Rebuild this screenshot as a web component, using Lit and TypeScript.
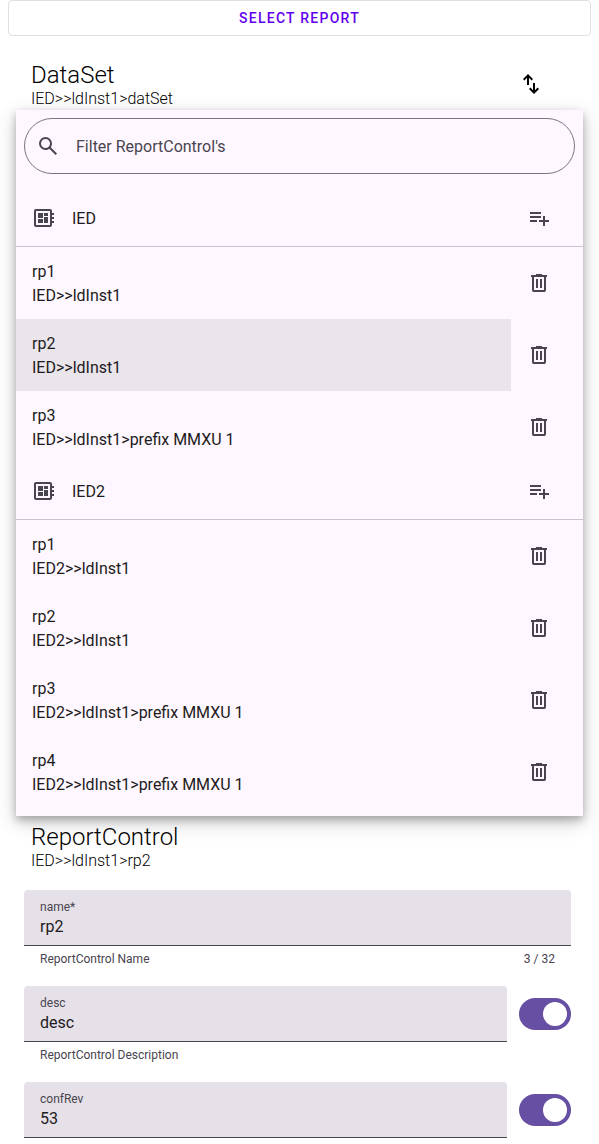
import { LitElement, html, css, svg } from "lit";
import { customElement, property } from "lit/decorators.js";

const icons: Record<string, { box: string; d: string }> = {
  swap: { box: "0 -960 960 960", d: "M320-440v-287L217-624l-57-56 200-200 200 200-57 56-103-103v287h-80ZM600-80 400-280l57-56 103 103v-287h80v287l103-103 57 56L600-80Z" },
  search: { box: "0 -960 960 960", d: "M784-120 532-372q-30 24-69 38t-83 14q-109 0-184.5-75.5T120-580q0-109 75.5-184.5T380-840q109 0 184.5 75.5T640-580q0 44-14 83t-38 69l252 252-56 56ZM380-400q75 0 127.5-52.5T560-580q0-75-52.5-127.5T380-760q-75 0-127.5 52.5T200-580q0 75 52.5 127.5T380-400Z" },
  board: { box: "0 0 24 24", d: "M22 9V7h-2V5c0-1.1-.9-2-2-2H4c-1.1 0-2 .9-2 2v14c0 1.1.9 2 2 2h14c1.1 0 2-.9 2-2v-2h2v-2h-2v-2h2v-2h-2V9h2zm-4 10H4V5h14v14zM6 13h5v4H6zm6-6h4v3h-4zM6 7h5v5H6zm6 4h4v6h-4z" },
  add: { box: "0 0 24 24", d: "M14 10H3v2h11v-2zm0-4H3v2h11V6zm4 8v-4h-2v4h-4v2h4v4h2v-4h4v-2h-4zM3 16h7v-2H3v2z" },
  trash: { box: "0 -960 960 960", d: "M280-120q-33 0-56.5-23.5T200-200v-520h-40v-80h200v-40h240v40h200v80h-40v520q0 33-23.5 56.5T680-120H280Zm400-600H280v520h400v-520ZM360-280h80v-360h-80v360Zm160 0h80v-360h-80v360Z" },
};

@customElement("md-glyph")
class MdGlyph extends LitElement {
  @property() name = "search";
  static styles = css`
    :host { display: block; flex: none; width: 24px; height: 24px; }
    svg { display: block; width: 24px; height: 24px; fill: currentColor; }
  `;
  render() {
    const icon = icons[this.name];
    return html`<svg viewBox=${icon.box}>${svg`<path d=${icon.d}></path>`}</svg>`;
  }
}

@customElement("report-field")
class ReportField extends LitElement {
  @property() label = "";
  @property() value = "";
  @property() help = "";
  @property() counter = "";
  @property({ type: Boolean }) nullable = false;
  static styles = css`
    :host { display: flex; gap: 12px; height: 96px; }
    .column { flex: 1; }
    .box {
      box-sizing: border-box; height: 56px; padding: 9px 16px 6px;
      background: #e6e0e9; border-bottom: 1px solid #49454f; border-radius: 4px 4px 0 0;
    }
    .label { font-size: 12px; line-height: 16px; color: #49454f; }
    .value { font-size: 16px; line-height: 24px; color: #1d1b20; }
    .support {
      display: flex; justify-content: space-between; padding: 5px 16px 0;
      font-size: 12px; line-height: 16px; color: #49454f;
    }
    .switch {
      box-sizing: border-box; display: flex; justify-content: flex-end;
      width: 52px; height: 32px; margin-top: 12px; padding: 4px;
      border-radius: 16px; background: #6750a4;
    }
    .knob { width: 24px; height: 24px; border-radius: 50%; background: #fff; }
  `;
  render() {
    return html`
      <div class="column">
        <div class="box">
          <div class="label">${this.label}</div>
          <div class="value">${this.value}</div>
        </div>
        <div class="support"><span>${this.help}</span><span>${this.counter}</span></div>
      </div>
      ${this.nullable ? html`<div class="switch"><div class="knob"></div></div>` : null}
    `;
  }
}

const groups = [
  { name: "IED", items: [["rp1", "IED>>ldInst1"], ["rp2", "IED>>ldInst1"], ["rp3", "IED>>ldInst1>prefix MMXU 1"]] },
  { name: "IED2", items: [["rp1", "IED2>>ldInst1"], ["rp2", "IED2>>ldInst1"], ["rp3", "IED2>>ldInst1>prefix MMXU 1"], ["rp4", "IED2>>ldInst1>prefix MMXU 1"]] },
];

@customElement("app-root")
class AppRoot extends LitElement {
  static styles = css`
    :host {
      display: block; height: 1144px; overflow: hidden; background: #fff;
      font-family: Roboto, sans-serif; color: #1d1b20;
    }
    .select {
      box-sizing: border-box; height: 36px; margin: 0 8px;
      border: 1px solid #e0e0e0; border-radius: 4px; color: #6200ee;
      font-size: 14px; font-weight: 500; line-height: 34px; letter-spacing: 1.25px; text-align: center;
    }
    .dataset {
      box-sizing: border-box; display: flex; justify-content: space-between;
      height: 74px; padding: 24px 56px 0 31px; color: #000;
    }
    .swap { margin-top: 12px; }
    .title { margin: 0; font-size: 24px; font-weight: 300; line-height: 30px; color: #000; }
    .path { font-size: 16px; font-weight: 300; line-height: 18px; color: #000; }
    .menu {
      margin: 0 16px; padding: 8px 0; background: #fef7ff;
      box-shadow: 0 4px 8px rgba(0, 0, 0, 0.25), 0 6px 20px rgba(0, 0, 0, 0.19);
    }
    .filter {
      box-sizing: border-box; display: flex; align-items: center; gap: 16px;
      height: 56px; margin: 0 8px 16px; padding: 0 11px;
      border: 1px solid #79747e; border-radius: 28px;
      font-size: 16px; color: #49454f;
    }
    .group {
      display: flex; align-items: center; gap: 16px; height: 56px; padding: 0 32px 0 16px;
      border-bottom: 1px solid #cac4d0; font-size: 16px;
    }
    .group-name { flex: 1; }
    .muted { color: #49454f; }
    .row { display: flex; height: 72px; }
    .item {
      box-sizing: border-box; flex: 1; padding: 13px 16px 11px;
      font-size: 16px; line-height: 24px;
    }
    .selected { background: #eae4eb; }
    .action { display: flex; align-items: center; width: 56px; padding-left: 16px; color: #49454f; }
    .report { padding: 6px 31px 0; }
    .fields { display: flex; flex-direction: column; padding: 20px 28px 0 24px; }
  `;
  render() {
    return html`
      <div class="select">SELECT REPORT</div>
      <div class="dataset">
        <div>
          <h2 class="title">DataSet</h2>
          <div class="path">IED>>ldInst1>datSet</div>
        </div>
        <md-glyph class="swap" name="swap"></md-glyph>
      </div>
      <div class="menu">
        <div class="filter"><md-glyph name="search"></md-glyph><span>Filter ReportControl's</span></div>
        ${groups.map((group, g) => html`
          <div class="group">
            <md-glyph class="muted" name="board"></md-glyph>
            <span class="group-name">${group.name}</span>
            <md-glyph class="muted" name="add"></md-glyph>
          </div>
          ${group.items.map(([name, path], i) => html`
            <div class="row">
              <div class="item ${g === 0 && i === 1 ? "selected" : ""}">
                <div>${name}</div>
                <div>${path}</div>
              </div>
              <div class="action"><md-glyph name="trash"></md-glyph></div>
            </div>`)}
        `)}
      </div>
      <div class="report">
        <h2 class="title">ReportControl</h2>
        <div class="path">IED>>ldInst1>rp2</div>
      </div>
      <div class="fields">
        <report-field label="name*" value="rp2" help="ReportControl Name" counter="3 / 32"></report-field>
        <report-field label="desc" value="desc" help="ReportControl Description" nullable></report-field>
        <report-field label="confRev" value="53" nullable></report-field>
      </div>
    `;
  }
}
